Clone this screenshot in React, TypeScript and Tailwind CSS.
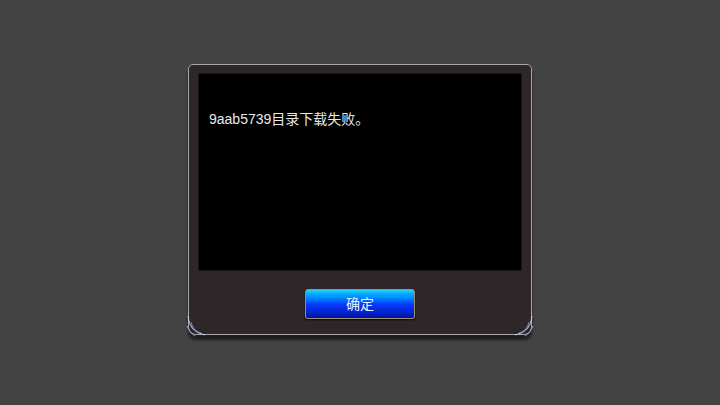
export default function App() {
  return (
    <div className="w-[720px] h-[405px] bg-[#434343] flex items-start justify-center pt-[64px]" style={{ fontFamily: '"Liberation Sans", "Noto Sans CJK SC", sans-serif' }}>
      <div className="relative w-[344px] h-[271px] rounded-t-[5px] rounded-b-[8px] bg-[#2e2628] border border-[#a9a9a3] shadow-[0_5px_3px_rgba(0,0,0,0.55)] flex flex-col items-center pt-[8px] px-[8px]">
        <div className="w-[324px] h-[198px] bg-black rounded-[2px] border border-[#1a1517] pl-[10px] pt-[36px]">
          <p className="text-[14px] text-[#e8e8e8] leading-[18px]">9aab5739目录下载失败。</p>
        </div>
        <button className="mt-[18px] w-[110px] h-[30px] rounded-[3px] border border-[#9c9270] bg-gradient-to-b from-[#2fd0ff] via-[#0a3cff] to-[#0010a8] text-[14px] text-[#eef4ff] shadow-[0_1px_2px_rgba(0,0,0,0.8)]">
          确定
        </button>
        <svg className="absolute left-[-4px] bottom-[-4px]" width="24" height="24" viewBox="0 0 24 24" fill="none">
          <path d="M3 2 Q4 18 20 21" stroke="#c8d4e8" strokeWidth="1" />
          <path d="M6 8 Q8 17 16 19" stroke="#7d8cc0" strokeWidth="1" />
          <path d="M2 12 Q5 20 10 22" stroke="#9aa8d0" strokeWidth="1" />
        </svg>
        <svg className="absolute right-[-4px] bottom-[-4px]" width="24" height="24" viewBox="0 0 24 24" fill="none">
          <path d="M21 2 Q20 18 4 21" stroke="#c8d4e8" strokeWidth="1" />
          <path d="M18 8 Q16 17 8 19" stroke="#7d8cc0" strokeWidth="1" />
          <path d="M22 12 Q19 20 14 22" stroke="#9aa8d0" strokeWidth="1" />
        </svg>
      </div>
    </div>
  )
}
